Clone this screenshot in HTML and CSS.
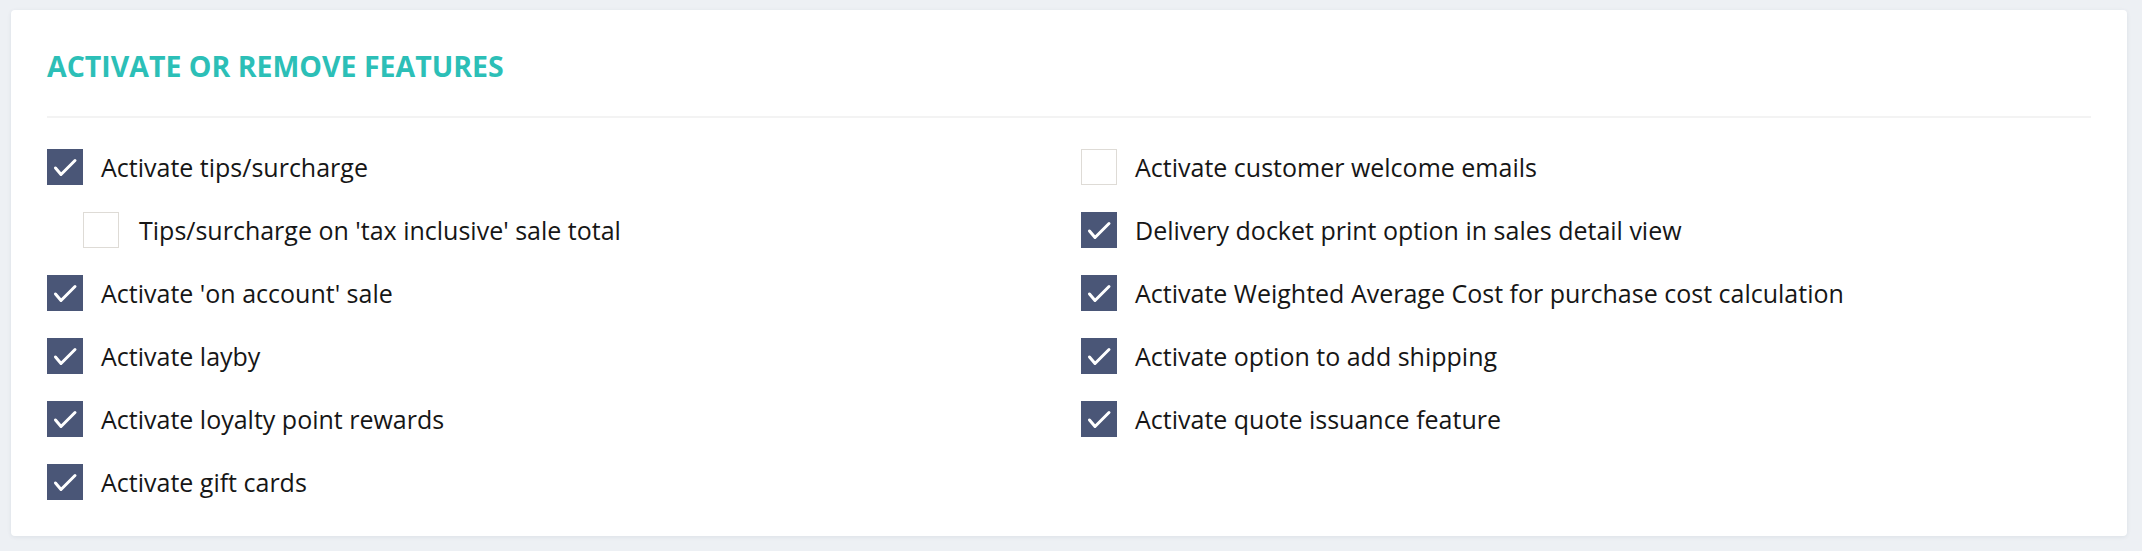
FILE: index.html
```html
<!DOCTYPE html>
<html lang="en">
<head>
    <meta charset="UTF-8">
    <title>Activate or remove features</title>
    <link rel="stylesheet" href="styles.css">
</head>
<body>
<div class="card">
    <h2 class="card-title">Activate or remove features</h2>
    <div class="features">
        <div class="feature-col">
            <label class="option">
                <span class="box checked"><svg viewBox="0 0 34 34"><path d="M7.5 18l5.5 6.5 14-14"/></svg></span>
                Activate tips/surcharge
            </label>
            <label class="option sub">
                <span class="box"></span>
                Tips/surcharge on 'tax inclusive' sale total
            </label>
            <label class="option">
                <span class="box checked"><svg viewBox="0 0 34 34"><path d="M7.5 18l5.5 6.5 14-14"/></svg></span>
                Activate 'on account' sale
            </label>
            <label class="option">
                <span class="box checked"><svg viewBox="0 0 34 34"><path d="M7.5 18l5.5 6.5 14-14"/></svg></span>
                Activate layby
            </label>
            <label class="option">
                <span class="box checked"><svg viewBox="0 0 34 34"><path d="M7.5 18l5.5 6.5 14-14"/></svg></span>
                Activate loyalty point rewards
            </label>
            <label class="option">
                <span class="box checked"><svg viewBox="0 0 34 34"><path d="M7.5 18l5.5 6.5 14-14"/></svg></span>
                Activate gift cards
            </label>
        </div>
        <div class="feature-col">
            <label class="option">
                <span class="box"></span>
                Activate customer welcome emails
            </label>
            <label class="option">
                <span class="box checked"><svg viewBox="0 0 34 34"><path d="M7.5 18l5.5 6.5 14-14"/></svg></span>
                Delivery docket print option in sales detail view
            </label>
            <label class="option">
                <span class="box checked"><svg viewBox="0 0 34 34"><path d="M7.5 18l5.5 6.5 14-14"/></svg></span>
                Activate Weighted Average Cost for purchase cost calculation
            </label>
            <label class="option">
                <span class="box checked"><svg viewBox="0 0 34 34"><path d="M7.5 18l5.5 6.5 14-14"/></svg></span>
                Activate option to add shipping
            </label>
            <label class="option">
                <span class="box checked"><svg viewBox="0 0 34 34"><path d="M7.5 18l5.5 6.5 14-14"/></svg></span>
                Activate quote issuance feature
            </label>
        </div>
    </div>
</div>
</body>
</html>
```

FILE: styles.css
```css
:root {
    --teal: #2cbfb7;
    --box-color: #4a5677;
    --page-bg: #edf0f4;
    --text-color: #161616;
}

body {
    margin: 0;
    padding: 10px 15px 15px 11px;
    background-color: var(--page-bg);
    font-family: 'Open Sans', sans-serif;
    color: var(--text-color);
}

.card {
    background-color: #fff;
    border-radius: 4px;
    padding: 37px 36px 36px;
    box-shadow: 0 1px 4px rgba(30, 45, 80, 0.08);
}

.card-title {
    margin: 0 0 31px;
    padding-bottom: 31px;
    border-bottom: 2px solid #f3f3f3;
    font-size: 28.5px;
    line-height: 38px;
    font-weight: 700;
    text-transform: uppercase;
    color: var(--teal);
}

.features {
    display: grid;
    grid-template-columns: 1fr 1fr;
    column-gap: 24px;
}

.feature-col {
    display: flex;
    flex-direction: column;
    gap: 27px;
}

.option {
    display: flex;
    align-items: center;
    gap: 18px;
    height: 36px;
    font-size: 25px;
}

.option.sub {
    margin-left: 36px;
    gap: 20px;
}

.box {
    box-sizing: border-box;
    width: 36px;
    height: 36px;
    flex: none;
    border: 1px solid #dedbd6;
    background-color: #fff;
}

.box.checked {
    border-color: var(--box-color);
    background-color: var(--box-color);
}

.box svg {
    display: block;
    width: 34px;
    height: 34px;
    fill: none;
    stroke: #fff;
    stroke-width: 3;
    stroke-linecap: round;
    stroke-linejoin: round;
}
```
